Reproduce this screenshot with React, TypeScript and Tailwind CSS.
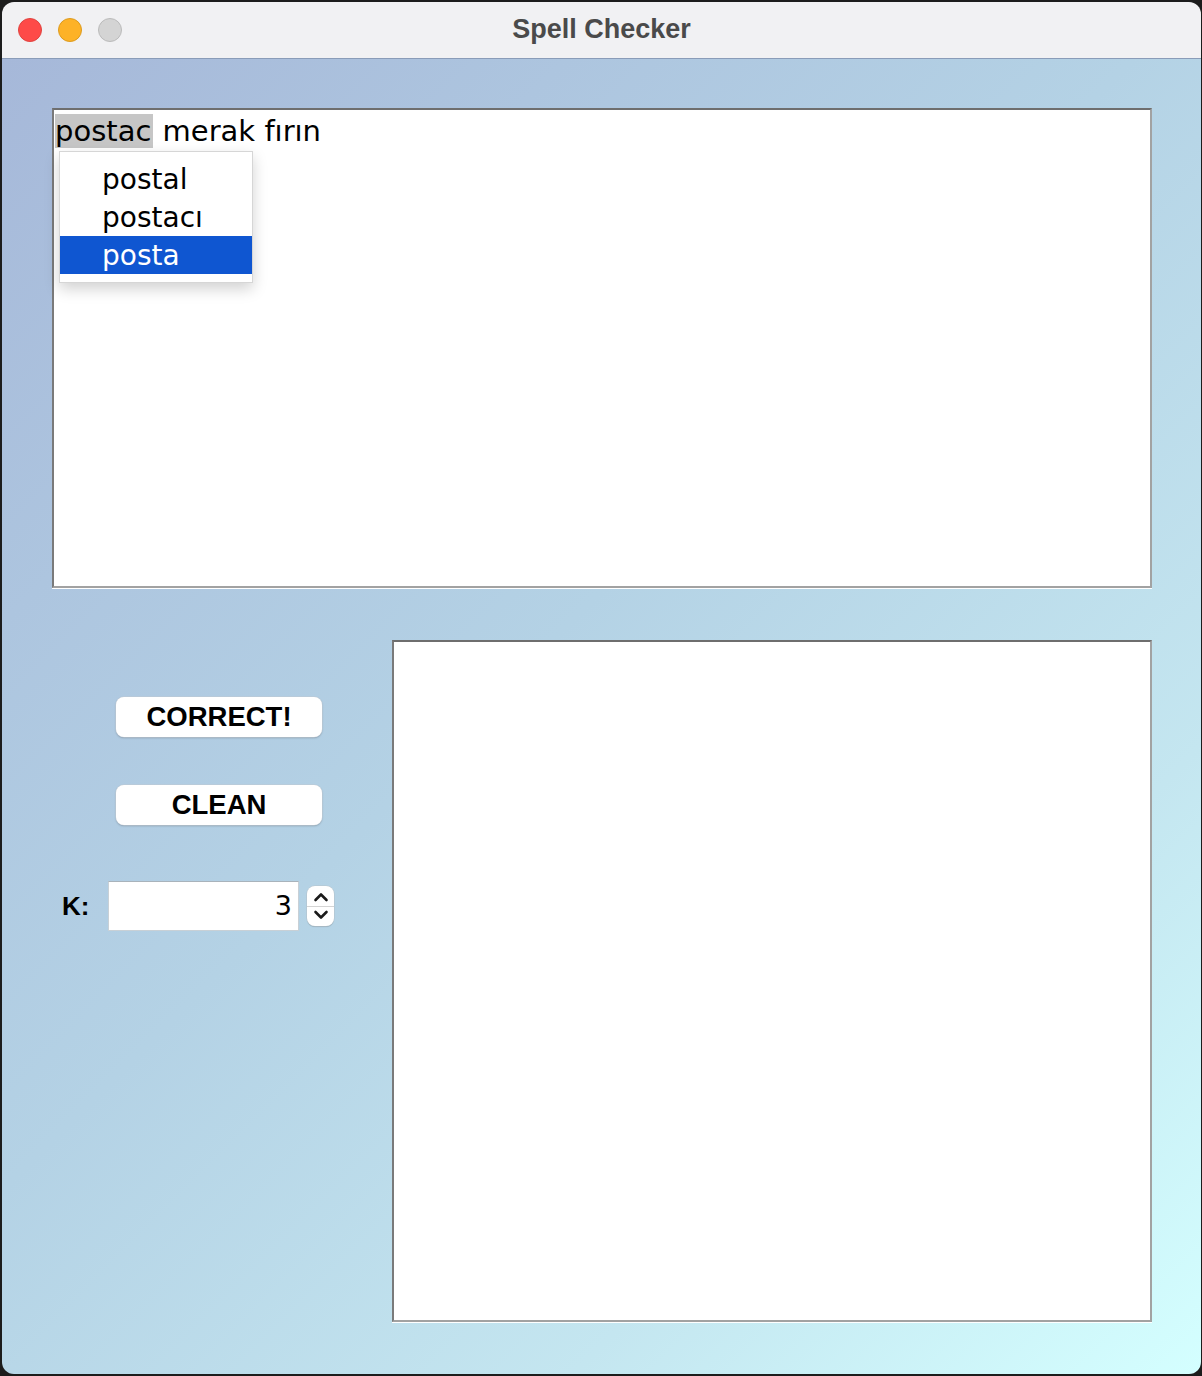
import React from "react";

const suggestions = ["postal", "postacı", "posta"];

const Spinner = () => (
  <div className="flex h-[40px] w-[27px] flex-col overflow-hidden rounded-[8px] bg-white shadow-[0_0_0_0.5px_#b8c4cc,0_1px_1px_rgba(0,0,0,0.2)]">
    <div className="flex flex-1 items-center justify-center border-b border-[#d4d4d4] pt-[2px]">
      <svg width="16" height="10" viewBox="0 0 16 10" fill="none">
        <path d="M2.5 8 8 2.5 13.5 8" stroke="#1a1a1a" strokeWidth="2.6" strokeLinecap="round" strokeLinejoin="round" />
      </svg>
    </div>
    <div className="flex flex-1 items-center justify-center pb-[2px]">
      <svg width="16" height="10" viewBox="0 0 16 10" fill="none">
        <path d="M2.5 2 8 7.5 13.5 2" stroke="#1a1a1a" strokeWidth="2.6" strokeLinecap="round" strokeLinejoin="round" />
      </svg>
    </div>
  </div>
);

const MacButton = ({ label }: { label: string }) => (
  <button className="flex h-[40px] w-[206px] items-center justify-center rounded-[8px] bg-white font-['Liberation_Sans',Arial,sans-serif] text-[27.5px] font-bold leading-none text-black shadow-[0_0_0_0.5px_#c4ccd4,0_1px_2px_rgba(0,0,0,0.25)]">
    {label}
  </button>
);

export default function App() {
  return (
    <div className="h-[1376px] w-[1202px] bg-[#1c1c1c] pl-[2px] pt-[2px]">
      <div className="flex h-[1372px] w-[1199px] flex-col overflow-hidden rounded-[12px]">
        {/* title bar */}
        <div className="relative flex h-[57px] shrink-0 items-center border-b border-[#8a9cb8] bg-[#f1f1f3]">
          <div className="flex items-center gap-[16px] pl-[16px]">
            <span className="h-[24px] w-[24px] rounded-full border border-[#e0433f] bg-[#fe4a48]" />
            <span className="h-[24px] w-[24px] rounded-full border border-[#dd9b1e] bg-[#fdb227]" />
            <span className="h-[24px] w-[24px] rounded-full border border-[#bbbbbb] bg-[#d4d4d4]" />
          </div>
          <div className="absolute inset-0 flex items-center justify-center pb-[2px] font-['Liberation_Sans',Arial,sans-serif] text-[27px] font-bold text-[#4a4a4a]">
            Spell Checker
          </div>
        </div>

        {/* content */}
        <div className="flex flex-1 flex-col bg-[linear-gradient(135deg,#a6b8d9_0%,#b4d2e5_45%,#c4e6f0_75%,#d4ffff_100%)] pb-[51px] pl-[50px] pr-[49px] pt-[49px]">
          <div className="border-b border-white">
            <div className="relative h-[480px] w-[1100px] border-2 border-b-[#a2a2a2] border-l-[#7a7a7a] border-r-[#a2a2a2] border-t-[#6e6e6e] bg-white font-['DejaVu_Sans',sans-serif] text-black">
              <div className="pl-[1px] pt-[2px] text-[29px] leading-[38px]">
                <span className="bg-[#c6c6c6] pr-[2px]">postac</span> merak fırın
              </div>
              <div className="absolute left-[5px] top-[41px] w-[194px] border border-[#d6d6d6] bg-white py-[8px] shadow-[0_6px_14px_rgba(0,0,0,0.18)]">
                {suggestions.map((s, i) => (
                  <div
                    key={s}
                    className={
                      i === 2
                        ? "h-[38px] bg-[#0f56d1] pl-[42px] pt-[2px] text-[28px] leading-[36px] text-white"
                        : "h-[38px] pl-[42px] pt-[2px] text-[28px] leading-[36px] text-black"
                    }
                  >
                    {s}
                  </div>
                ))}
              </div>
            </div>
          </div>

          <div className="mt-[51px] flex flex-1">
            <div className="flex w-[340px] flex-col">
              <div className="ml-[64px] mt-[57px] flex flex-col gap-[48px]">
                <MacButton label="CORRECT!" />
                <MacButton label="CLEAN" />
              </div>
              <div className="ml-[10px] mt-[56px] flex items-center">
                <span className="w-[46px] font-['Liberation_Sans',Arial,sans-serif] text-[26px] font-bold text-black">K:</span>
                <div className="flex h-[50px] w-[191px] items-center justify-end border border-[#c8d0d6] border-t-[#a9b3bb] bg-white pr-[6px] font-['DejaVu_Sans',sans-serif] text-[27px] text-black">
                  3
                </div>
                <div className="ml-[8px]">
                  <Spinner />
                </div>
              </div>
            </div>
            <div className="border-b border-white">
              <div className="h-[682px] w-[760px] border-2 border-b-[#a2a2a2] border-l-[#7a7a7a] border-r-[#a2a2a2] border-t-[#6e6e6e] bg-white" />
            </div>
          </div>
        </div>
      </div>
    </div>
  );
}
